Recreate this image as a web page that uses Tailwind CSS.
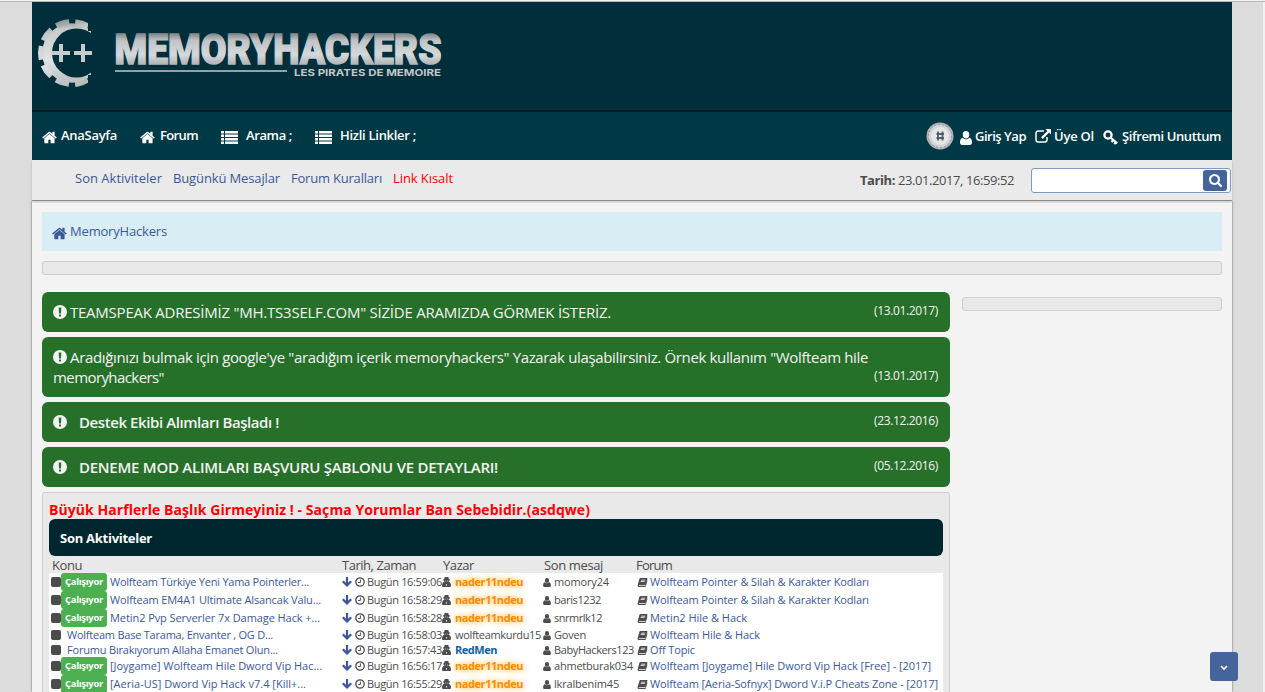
<!DOCTYPE html>
<html lang="tr">
<head>
<meta charset="utf-8">
<title>MemoryHackers</title>
<script src="https://cdn.jsdelivr.net/npm/@tailwindcss/browser@4"></script>
</head>
<body class="h-[692px] overflow-hidden bg-[#dcdcdc] font-['Open_Sans','Noto_Sans',sans-serif] text-[13px] text-[#4c4c4c]">
<svg class="hidden">
  <symbol id="home" viewBox="60 200 1680 1400"><path d="M1472 992v480q0 26-19 45t-45 19h-384v-384h-256v384h-384q-26 0-45-19t-19-45v-480q0-1 .5-3t.5-3l575-474 575 474q1 2 1 6zm223-69l-62 74q-8 9-21 11h-3q-13 0-21-7l-692-577-692 577q-12 8-24 7-13-2-21-11l-62-74q-8-10-7-23.500t11-21.500l719-599q32-26 76-26t76 26l244 204v-195q0-14 9-23t23-9h192q14 0 23 9t9 23v408l219 182q10 8 11 21.500t-7 23.500z"/></symbol>
  <symbol id="list" viewBox="0 0 17 13"><path d="M0 0h3v2.500H0zM4 0h13v2.500H4zM0 3.500h3V6H0zM4 3.500h13V6H4zM0 7h3v2.500H0zM4 7h13v2.500H4zM0 10.500h3V13H0zM4 10.500h13V13H4z"/></symbol>
  <symbol id="user" viewBox="0 0 12 14"><path d="M6 0a3.300 3.700 0 0 1 3.300 3.700C9.300 5.900 7.800 7.500 6 7.500S2.700 5.900 2.700 3.700A3.300 3.700 0 0 1 6 0zM2.900 6.700C3.700 7.700 4.800 8.300 6 8.300s2.300-.6 3.100-1.600C11.200 6.900 12 9 12 11.500 12 13 11.200 14 9.800 14H2.200C.8 14 0 13 0 11.500 0 9 .8 6.900 2.900 6.700z"/></symbol>
  <symbol id="ext" viewBox="0 0 16 14"><path d="M9 2H3.200A2.200 2.200 0 0 0 1 4.200v6.600A2.200 2.200 0 0 0 3.200 13h6.600a2.200 2.200 0 0 0 2.200-2.200V8" fill="none" stroke="currentColor" stroke-width="1.500"/><path d="M10.500 0H16v5.500l-1.900-1.900-6.300 6.300L6.100 8.200l6.300-6.300z"/></symbol>
  <symbol id="key" viewBox="0 0 16 15"><circle cx="5" cy="5" r="3.600" fill="none" stroke="currentColor" stroke-width="2.300"/><path d="M7.500 7.500l6.700 5.800M10.300 10l-1.800 2M12.800 12.200l-1.600 1.800" fill="none" stroke="currentColor" stroke-width="2.200"/></symbol>
  <symbol id="search" viewBox="64 128 1664 1664"><path d="M1216 832q0-185-131.500-316.500t-316.500-131.500-316.500 131.500-131.500 316.500 131.500 316.500 316.500 131.500 316.500-131.500 131.500-316.500zm512 832q0 52-38 90t-90 38q-54 0-90-38l-343-342q-179 124-399 124-143 0-273.500-55.500t-225-150-150-225-55.500-273.500 55.500-273.500 150-225 225-150 273.500-55.500 273.500 55.500 225 150 150 225 55.500 273.500q0 220-124 399l343 343q37 37 37 90z"/></symbol>
  <symbol id="excl" viewBox="0 0 14 14"><path fill-rule="evenodd" d="M7 0a7 7 0 1 1 0 14A7 7 0 0 1 7 0zM5.700 2.500L6 8.400h2l.3-5.900zM6 9.500v2.100h2V9.500z"/></symbol>
  <symbol id="down" viewBox="0 0 10 10"><path d="M3.900 0h2.200v5.700l2.300-2.200L10 5 5 10 0 5l1.600-1.500 2.300 2.200z"/></symbol>
  <symbol id="clock" viewBox="0 0 10 10"><circle cx="5" cy="5" r="4.200" fill="none" stroke="currentColor" stroke-width="1.300"/><path d="M5.400 2.500v3H3" fill="none" stroke="currentColor"/></symbol>
  <symbol id="secret" viewBox="0 0 10 11"><path d="M3 0h4l.6 2.300 1.400.6v.8H7.900C7.800 5 6.800 6.300 5 6.300S2.200 5 2.100 3.700H1v-.8l1.400-.6zM2.200 5.200L5 6l2.800-.8C9.500 6 10 8 10 9.600c0 .9-.6 1.400-1.500 1.400h-7C.6 11 0 10.500 0 9.600 0 8 .5 6 2.200 5.200z"/><path d="M3.200 4h1.300v.7H3.200zM5.500 4h1.300v.7H5.500zM4.300 8l.4 2.300.3-1.800.3 1.800.4-2.300z" fill="#fff"/></symbol>
  <symbol id="book" viewBox="0 0 11 10"><path fill-rule="evenodd" d="M3.200 0h7.100c.6 0 .8.500.6 1L9 7.300c-.2.500-.5.700-1 .7H1.800c-.6 0-.6.900 0 .9h6.800l2-6.300c.5.200.4.600.3 1L9.300 9.200c-.2.500-.6.800-1.100.8H1.600C.4 10-.2 9 .1 8L2 1C2.200.3 2.600 0 3.200 0zM4 2l-.2.700h4.600L8.600 2zM3.500 3.700l-.2.700h4.600l.2-.7z"/></symbol>
</svg>

<div class="h-px bg-[#f1f1f1]"></div>
<div class="h-px bg-[#b3b7b8]"></div>
<div class="flex h-[690px] justify-between">
  <div class="w-8"></div>
  <div class="w-[1200px]">
    <header class="h-[108px] bg-[#002f3b]">
      <svg class="block" width="430" height="108" viewBox="32 2 430 108">
        <defs>
          <linearGradient id="silver" gradientUnits="userSpaceOnUse" x1="0" y1="19" x2="0" y2="87"><stop offset="0" stop-color="#8e9293"/><stop offset=".15" stop-color="#c6cacb"/><stop offset=".6" stop-color="#dfe3e4"/><stop offset="1" stop-color="#b4b8b9"/></linearGradient>
          <linearGradient id="word" gradientUnits="userSpaceOnUse" x1="0" y1="34" x2="0" y2="66"><stop offset="0" stop-color="#85898b"/><stop offset=".2" stop-color="#bfc3c5"/><stop offset=".65" stop-color="#d5d9db"/><stop offset="1" stop-color="#a9adaf"/></linearGradient>
          <mask id="ring"><path d="M32 10h56v21h3v44h-3v21H32z" fill="#fff"/><circle cx="76.500" cy="53" r="24.500" fill="#000"/></mask>
        </defs>
        <g mask="url(#ring)">
          <circle cx="72" cy="53" r="29.800" fill="url(#silver)"/>
          <circle cx="72" cy="53" r="31" fill="none" stroke="url(#silver)" stroke-width="6" stroke-dasharray="13.500 5.978" transform="rotate(-12.500 72 53)"/>
        </g>
        <path d="M59 44h4v7h7v4h-7v7h-4v-7h-7.500v-4H59zM81 44h4v7h7v4h-7v7h-4v-7h-7v-4h7z" fill="#c6cacc"/>
        <text x="114.500" y="64.300" font-family="Roboto" font-weight="900" font-size="42" textLength="327" lengthAdjust="spacingAndGlyphs" fill="url(#word)" stroke="url(#word)" stroke-width="1.500">MEMORYHACKERS</text>
        <path d="M115 71h172" stroke="#c6cacc" stroke-width="1.700"/>
        <text x="294" y="76" font-family="Inter" font-weight="700" font-size="9.500" textLength="147" lengthAdjust="spacingAndGlyphs" fill="#c3c7c9">LES PIRATES DE MEMOIRE</text>
      </svg>
    </header>
    <nav class="flex h-[50px] items-center justify-between border-t-2 border-[#021c22] bg-[#003946] pr-[11px] pl-[10px] font-semibold text-white">
      <div class="flex items-center">
        <svg class="mt-[3px] mr-1 h-[13px] w-[15px] fill-current"><use href="#home"/></svg><span data-w="56">AnaSayfa</span>
        <svg class="mt-[3px] mr-[5px] ml-[23px] h-[13px] w-[15px] fill-current"><use href="#home"/></svg><span data-w="38">Forum</span>
        <svg class="mt-[2px] mr-2 ml-[23px] h-[13px] w-[17px] fill-current"><use href="#list"/></svg><span data-w="46">Arama ;</span>
        <svg class="mt-[2px] mr-2 ml-[23px] h-[13px] w-[17px] fill-current"><use href="#list"/></svg><span data-w="76">Hizli Linkler ;</span>
      </div>
      <div class="flex items-center">
        <svg class="mr-[6px] h-7 w-7" viewBox="0 0 28 28"><circle cx="14" cy="14" r="13.500" fill="#aeb2b7"/><circle cx="14" cy="14" r="11.500" fill="#d2d5d7" stroke="#9599a0" stroke-dasharray="2 2"/><circle cx="14" cy="14" r="9" fill="#e4e6e7"/><path d="M12 9.500v9M16.500 9.500v9M10.500 12h7.500M10.500 16h7.500" stroke="#555a70" stroke-width="1.800" fill="none"/></svg>
        <svg class="mt-[3px] mr-[3px] h-[14px] w-[12px] fill-current"><use href="#user"/></svg><span class="mt-px" data-w="51">Giriş Yap</span>
        <svg class="mr-[3px] ml-[9px] h-[14px] w-[16px] fill-current"><use href="#ext"/></svg><span class="mt-px" data-w="40">Üye Ol</span>
        <svg class="mt-[2px] mr-[3px] ml-[9px] h-[15px] w-[16px] fill-current"><use href="#key"/></svg><span class="mt-px" data-w="99">Şifremi Unuttum</span>
      </div>
    </nav>
    <div class="relative flex h-[41px] items-center justify-between border-b border-[#8c8c8c] bg-[#eaeaea] pr-px pl-[43px] shadow-[0_1px_2px_#0003]">
      <div class="-mt-[3px] flex gap-[11px] text-[#3b5998]">
        <span data-w="87">Son Aktiviteler</span><span data-w="107">Bugünkü Mesajlar</span><span data-w="91">Forum Kuralları</span><span class="text-[#ff0000]" data-w="60">Link Kısalt</span>
      </div>
      <div class="flex items-center">
        <span class="mt-[2px] mr-[3px] font-bold" data-w="35">Tarih:</span><span class="mt-[2px]" data-w="116">23.01.2017, 16:59:52</span>
        <div class="ml-[17px] flex h-[25px] w-[200px] items-center justify-end rounded-[3px] border border-[#7a9cc0] bg-white pr-[3px]">
          <div class="flex h-[21px] w-6 items-center justify-center rounded-[3px] bg-[#45649b] text-white"><svg class="size-[13px] fill-current"><use href="#search"/></svg></div>
        </div>
      </div>
    </div>
    <main class="h-[491px] bg-[#f3f3f3] px-[10px] pt-[11px] shadow-[0_0_2px_#0009]">
      <div class="flex h-[39px] items-center bg-[#d9edf5] pl-[10px] text-[#3b5998]">
        <svg class="mt-[3px] mr-[3px] h-[13px] w-[15px] fill-current"><use href="#home"/></svg><span data-w="97">MemoryHackers</span>
      </div>
      <div class="mt-[10px] h-[14px] rounded-[3px] border border-[#cfcfcf] bg-[#e9e9e9]"></div>
      <div class="mt-[17px] flex justify-between">
        <section class="w-[908px]">
          <div class="flex flex-col gap-[5px] text-[15px] leading-5 text-[#f3f3f3] [&>div]:flex [&>div]:justify-between [&>div]:rounded-[6px] [&>div]:bg-[#27702a] [&>div]:pr-[12px] [&>div]:pl-[11px] [&>div]:py-[10px]">
            <div><p class="flex"><svg class="mt-[3px] mr-[3px] size-[14px] fill-current"><use href="#excl"/></svg><span data-w="541">TEAMSPEAK ADRESİMİZ "MH.TS3SELF.COM" SİZİDE ARAMIZDA GÖRMEK İSTERİZ.</span></p><time class="-mt-[1px] text-xs leading-5" data-w="64">(13.01.2017)</time></div>
            <div><div><p class="flex"><svg class="mt-[3px] mr-[3px] size-[14px] fill-current"><use href="#excl"/></svg><span data-w="798">Aradığınızı bulmak için google'ye "aradığım içerik memoryhackers" Yazarak ulaşabilirsiniz. Örnek kullanım "Wolfteam hile</span></p><p><span data-w="111">memoryhackers"</span></p></div><time class="-ml-8 mt-[19px] text-xs leading-5" data-w="64">(13.01.2017)</time></div>
            <div class="font-semibold"><p class="flex"><svg class="mt-[3px] mr-[12px] size-[14px] fill-current"><use href="#excl"/></svg><span data-w="200">Destek Ekibi Alımları Başladı !</span></p><time class="-mt-[1px] text-xs leading-5 font-normal" data-w="64">(23.12.2016)</time></div>
            <div class="font-semibold"><p class="flex"><svg class="mt-[3px] mr-[12px] size-[14px] fill-current"><use href="#excl"/></svg><span data-w="419">DENEME MOD ALIMLARI BAŞVURU ŞABLONU VE DETAYLARI!</span></p><time class="-mt-[1px] text-xs leading-5 font-normal" data-w="64">(05.12.2016)</time></div>
          </div>
          <div class="mt-[5px] h-[220px] rounded-t-[3px] border border-[#cfcfcf] bg-[#e9e9e9] px-[6px] pt-[7px]">
            <p class="h-[19px] text-sm leading-[19px] font-bold text-[#ff0000]"><span data-w="541">Büyük Harflerle Başlık Girmeyiniz ! - Saçma Yorumlar Ban Sebebidir.(asdqwe)</span></p>
            <h2 class="flex h-[37px] items-center rounded-[6px] bg-[#002730] pt-[2px] pl-[11px] text-[13px] font-bold text-white"><span data-w="92">Son Aktiviteler</span></h2>
            <div class="flex h-[17px] items-center pl-[3px] pt-[2px] text-[13px]">
              <div class="w-[290px]"><span data-w="30">Konu</span></div><div class="w-[101px]"><span data-w="74">Tarih, Zaman</span></div><div class="w-[101px]"><span data-w="31">Yazar</span></div><div class="w-[92px]"><span data-w="59">Son mesaj</span></div><span data-w="36">Forum</span>
            </div>
            <div id="rows" class="bg-white text-[11px]"></div>
          </div>
        </section>
        <aside class="mt-[5px] h-[14px] w-[260px] rounded-[3px] border border-[#cfcfcf] bg-[#e9e9e9]"></aside>
      </div>
    </main>
  </div>
  <div class="flex w-[33px] justify-end"><div class="w-[2px] bg-[#f1f1f1]"></div></div>
</div>
<button class="fixed top-[652px] left-[1210px] flex h-[29px] w-7 items-center justify-center rounded-[3px] bg-[#45649b]"><svg width="8" height="6" viewBox="0 0 8 6" class="mt-[2px]"><path d="M1 1l3 3 3-3" fill="none" stroke="#fff" stroke-width="1.600"/></svg></button>
<script>
const N = 'nader11ndeu';
// working badge, title, title width, time, author, last poster, poster width, forum, forum width
const data = [
  [1,'Wolfteam Türkiye Yeni Yama Pointerler...',199,'16:59:06',N,'momory24',55,'Wolfteam Pointer &amp; Silah &amp; Karakter Kodları',219],
  [1,'Wolfteam EM4A1 Ultimate Alsancak Valu...',211,'16:58:29',N,'baris1232',47,'Wolfteam Pointer &amp; Silah &amp; Karakter Kodları',219],
  [1,'Metin2 Pvp Serverler 7x Damage Hack +...',210,'16:58:28',N,'snrmrlk12',48,'Metin2 Hile &amp; Hack',97],
  [0,'Wolfteam Base Tarama, Envanter , OG D...',206,'16:58:03','wolfteamkurdu15','Goven',32,'Wolfteam Hile &amp; Hack',110],
  [0,'Forumu Bırakıyorum Allaha Emanet Olun...',211,'16:57:43','RedMen','BabyHackers123',80,'Off Topic',45],
  [1,'[Joygame] Wolfteam Hile Dword Vip Hac...',212,'16:56:17',N,'ahmetburak034',79,'Wolfteam [Joygame] Hile Dword Vip Hack [Free] - [2017]',281],
  [1,'[Aeria-US] Dword Vip Hack v7.4 [Kill+...',196,'16:55:29',N,'lkralbenim45',65,'Wolfteam [Aeria-Sofnyx] Dword V.i.P Cheats Zone - [2017]',288]
];
const author = n => n === N
  ? `<span class="font-bold text-[#ff8c00] [text-shadow:0_0_6px_#ffa500]" data-w="68">${n}</span>`
  : n === 'RedMen' ? `<span class="font-bold text-[#0b62a4]" data-w="42">${n}</span>` : `<span data-w="86">${n}</span>`;
document.getElementById('rows').innerHTML = data.map(([b,t,tw,h,a,l,lw,f,fw]) => `
<div class="flex items-center pl-[2px] ${b ? 'h-[18px]' : 'h-[15px] pt-px'}">
  <div class="flex w-[291px] items-center"><i class="size-[10px] rounded-[2px] bg-[#4c4c4c]"></i>
    ${b ? '<b class="mr-[3px] flex h-[18px] w-[46px] items-center justify-center rounded-[3px] bg-[#4caf50] pt-px text-[9.5px] text-white"><span data-w="38">Çalışıyor</span></b>' : '<i class="w-[6px]"></i>'}
    <span class="text-[#3b5998]" data-w="${tw}">${t}</span></div>
  <div class="flex w-[100px] items-center"><svg class="mr-[3px] size-[10px] fill-[#3b5998]"><use href="#down"/></svg><svg class="mr-[2px] size-[10px]"><use href="#clock"/></svg><span data-w="75">Bugün ${h}</span></div>
  <div class="flex w-[101px] items-center"><svg class="mr-[4px] h-[10px] w-[9px] fill-current"><use href="#secret"/></svg>${author(a)}</div>
  <div class="flex w-[94px] items-center"><svg class="mr-[3px] h-[9px] w-[8px] fill-current"><use href="#user"/></svg><span data-w="${lw}">${l}</span></div>
  <svg class="mr-[2px] h-[9px] w-[11px] fill-current"><use href="#book"/></svg><span class="text-[#3b5998]" data-w="${fw}">${f}</span>
</div>`).join('');
function fit() {
  document.querySelectorAll('[data-w]').forEach(e => {
    const w = +e.dataset.w, s = e.style;
    s.display = 'inline-block';
    s.whiteSpace = 'nowrap';
    s.flex = 'none';
    s.width = 'max-content';
    s.letterSpacing = '0px';
    s.letterSpacing = (w - e.getBoundingClientRect().width) / e.textContent.length + 'px';
    s.width = w + 'px';
  });
}
fit();
addEventListener('load', () => { fit(); document.fonts.ready.then(fit); requestAnimationFrame(fit); });
</script>
</body>
</html>
